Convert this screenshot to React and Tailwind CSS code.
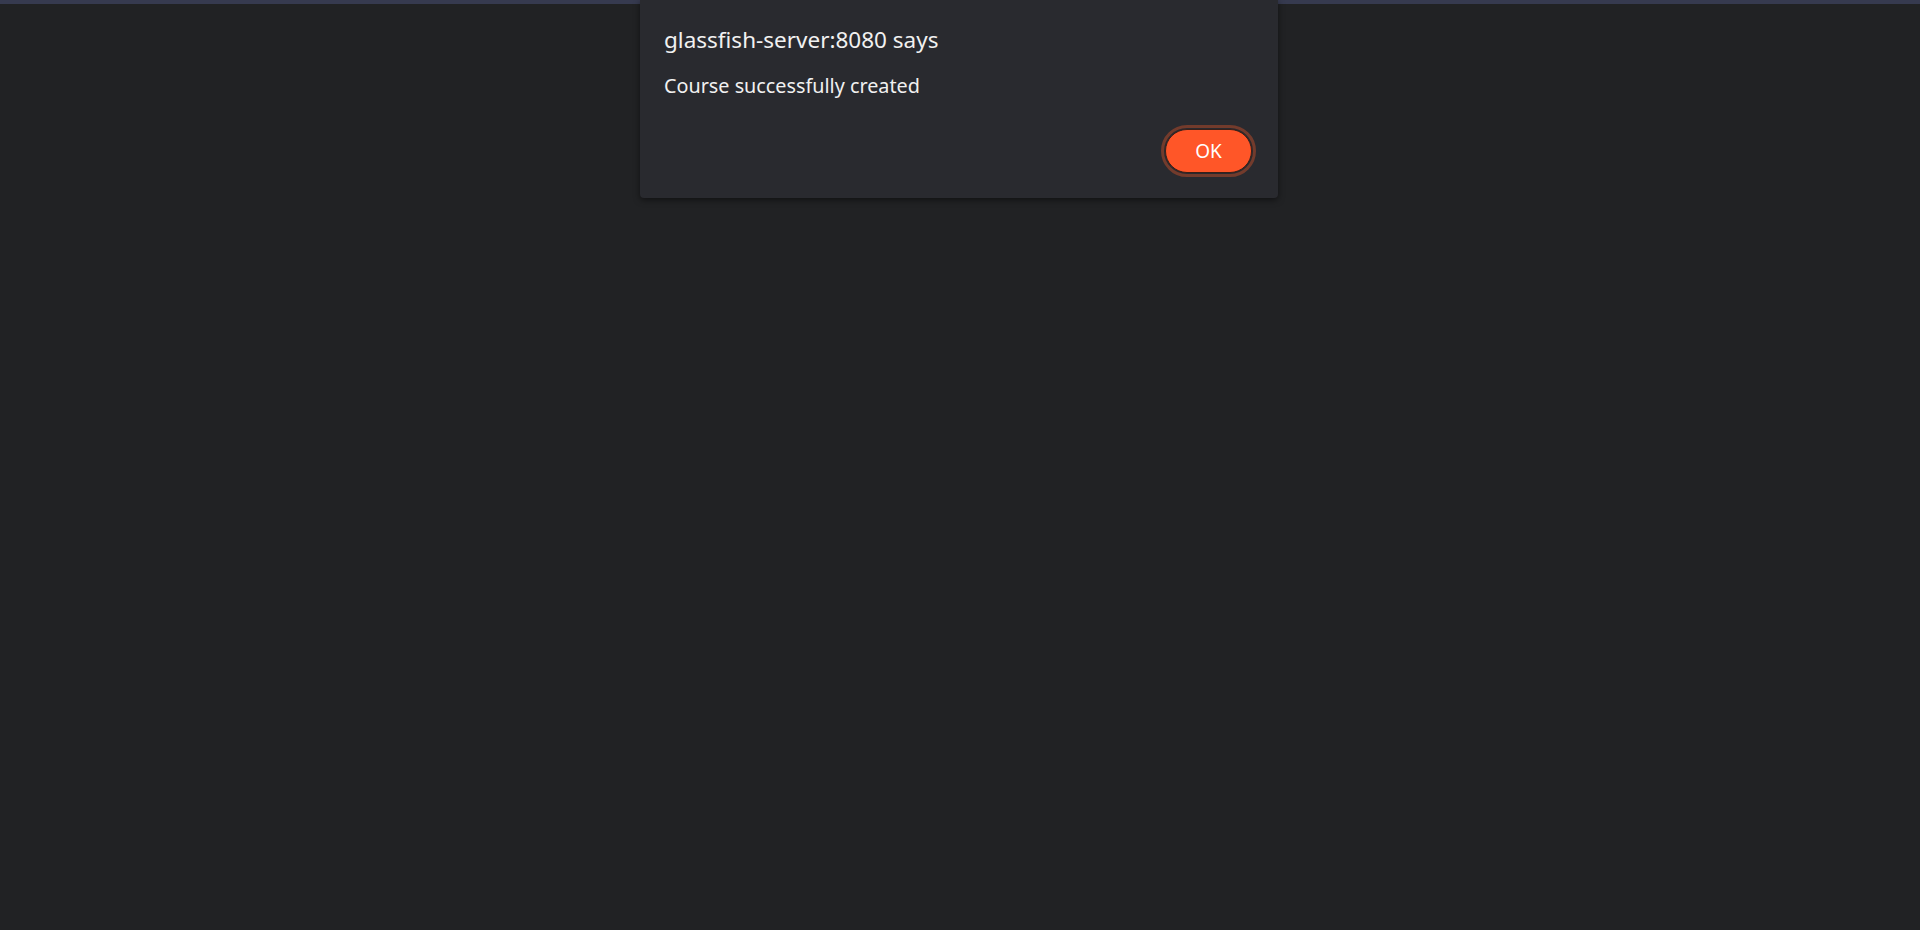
export default function App() {
  return (
    <div className="relative w-full h-[930px] bg-[#212224] overflow-hidden" style={{ fontFamily: '"Noto Sans", "Open Sans", sans-serif' }}>
      <div className="h-[4px] w-full bg-[#363a4f]" />
      <div className="absolute top-0 left-0 right-0 flex justify-center pr-[2px]">
        <div className="w-[638px] h-[198px] bg-[#292a2f] rounded-b-[4px] shadow-[0_2px_6px_rgba(0,0,0,0.5)] flex flex-col px-[24px]">
          <div className="pt-[24px] text-[22.5px] leading-[32px] text-[#f1f1f1]">glassfish-server:8080 says</div>
          <div className="pt-[16px] text-[19.8px] leading-[28px] text-[#f1f1f1]">Course successfully created</div>
          <div className="flex-1" />
          <div className="flex justify-end pb-[25px] pr-[2px]">
            <button className="w-[87px] h-[44px] rounded-full bg-[#ff5628] border border-[#3a1f18] outline-3 outline-offset-1 outline-[#733b2c] text-[19px] text-white">OK</button>
          </div>
        </div>
      </div>
    </div>
  );
}
